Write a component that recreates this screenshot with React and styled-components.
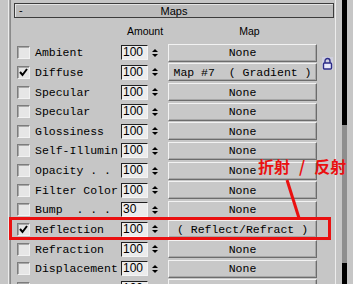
import React from 'react';
import styled, { createGlobalStyle } from 'styled-components';

const GlobalStyle = createGlobalStyle`
    html, body {
        margin: 0;
        padding: 0;
        background: #c6c6c6;
    }
    body {
        width: 353px;
        height: 284px;
        overflow: hidden;
    }
`;

const maps = [
    { name: 'Ambient', amount: 100 },
    { name: 'Diffuse', amount: 100, checked: true, map: 'Map #7  ( Gradient )' },
    { name: 'Specular', amount: 100 },
    { name: 'Specular', amount: 100 },
    { name: 'Glossiness', amount: 100 },
    { name: 'Self-Illumin', amount: 100 },
    { name: 'Opacity . .', amount: 100 },
    { name: 'Filter Color', amount: 100 },
    { name: 'Bump  . . .', amount: 30 },
    { name: 'Reflection', amount: 100, checked: true, map: '( Reflect/Refract )' },
    { name: 'Refraction', amount: 100 },
    { name: 'Displacement', amount: 100 },
    { name: '', amount: 100 },
];

const Page = styled.div`
    position: relative;
    display: flex;
    height: 284px;
    overflow: hidden;
    background: #c6c6c6;
    font-family: "Liberation Mono", monospace;
`;

const Gutter = styled.div`
    width: 14px;
    flex: none;
`;

const GutterLine = styled.div`
    height: 100%;
    width: 1px;
    margin-left: 8px;
    background: #a4a4a4;
    border-left: 1px solid #ececec;
    border-right: 1px solid #8a8a8a;
`;

const Rollout = styled.div`
    position: relative;
    width: 320px;
    flex: none;
    padding-top: 3px;
    display: flex;
    flex-direction: column;
    > * {
        flex: none;
    }
`;

const TitleBar = styled.div`
    height: 15px;
    box-sizing: border-box;
    display: grid;
    grid-template-columns: 1fr auto 1fr;
    align-items: center;
    background: #bcbcbc;
    border: 1px solid #3c3c3c;
    box-shadow: inset 1px 1px #e4e4e4;
    font-family: "Liberation Sans", Arial, sans-serif;
    font-size: 11px;
    color: #000;
`;

const Minus = styled.span`
    padding-left: 4px;
    line-height: 1;
`;

const Header = styled.div`
    height: 25px;
    display: grid;
    grid-template-columns: 108px 46px 149px;
    align-items: center;
    font-family: "Liberation Sans", Arial, sans-serif;
    font-size: 10.5px;
    color: #000;
`;

const HeadCell = styled.span`
    grid-column: ${p => p.$col};
    text-align: center;
    padding-left: ${p => p.$shift || 0}px;
`;

const Row = styled.div`
    height: 19.64px;
    display: flex;
    align-items: center;
    padding-left: 3px;
`;

const Check = styled.div`
    width: 13px;
    height: 13px;
    box-sizing: border-box;
    flex: none;
    display: flex;
    align-items: center;
    justify-content: center;
    background: #e6e6e6;
    border: 1px solid;
    border-color: #7c7c7c #f2f2f2 #f2f2f2 #7c7c7c;
    box-shadow: inset 1px 1px #a8a8a8;
`;

const Label = styled.span`
    width: 86px;
    margin-left: 5px;
    flex: none;
    font-size: 11.5px;
    white-space: pre;
    color: #000;
`;

const Field = styled.div`
    width: 27px;
    height: 15px;
    box-sizing: border-box;
    flex: none;
    padding-left: 1px;
    background: #ececec;
    border: 1px solid;
    border-color: #202020 #f4f4f4 #f4f4f4 #202020;
    font-family: "Liberation Sans", Arial, sans-serif;
    font-size: 12px;
    line-height: 13px;
    color: #000;
`;

const Spinner = styled.div`
    width: 13px;
    height: 15px;
    flex: none;
    display: flex;
    flex-direction: column;
    align-items: center;
    justify-content: center;
    gap: 2px;
`;

const Arrow = styled.span`
    width: 0;
    height: 0;
    border-left: 3px solid transparent;
    border-right: 3px solid transparent;
    ${p => p.$down ? 'border-top: 3px solid #000;' : 'border-bottom: 3px solid #000;'}
`;

const MapButton = styled.div`
    width: 149px;
    height: 18px;
    box-sizing: border-box;
    flex: none;
    margin-left: 7px;
    display: flex;
    align-items: center;
    justify-content: center;
    background: #c8c8c8;
    border: 1px solid;
    border-color: #f2f2f2 #6c6c6c #6c6c6c #f2f2f2;
    box-shadow: inset -1px -1px #a6a6a6;
    font-size: 11.5px;
    white-space: pre;
    color: #000;
`;

const Lock = styled.svg`
    position: absolute;
    left: 308px;
    top: 57px;
`;

const ScrollArea = styled.div`
    flex: 1;
    display: flex;
`;

const ScrollEdge = styled.div`
    width: 1px;
    margin-left: 1px;
    background: #ececec;
`;

const Track = styled.div`
    width: 5px;
    margin-left: 6px;
    display: flex;
    flex-direction: column;
    background: #8e8e8e;
`;

const Thumb = styled.div`
    height: ${p => p.$h}px;
    background: #000;
`;

const RedBox = styled.div`
    position: absolute;
    left: 9px;
    top: 217px;
    width: 322px;
    height: 23px;
    box-sizing: border-box;
    border: 3px solid #ea1010;
`;

const RedLabel = styled.div`
    position: absolute;
    left: 258px;
    top: 157px;
    display: flex;
    align-items: center;
    gap: 9px;
    color: #ea1010;
    font-family: "Noto Sans CJK SC", sans-serif;
    font-size: 16px;
    font-weight: 700;
    line-height: 18px;
`;

const Pointer = styled.svg`
    position: absolute;
    left: 0;
    top: 0;
`;

function CheckMark() {
    return (
        <svg width="9" height="9" viewBox="0 0 9 9">
            <polyline points="1,4 3.5,7 8,1" fill="none" stroke="#000" strokeWidth="2" />
        </svg>
    );
}

export default function App() {
    return (
        <Page>
            <GlobalStyle />
            <Gutter><GutterLine /></Gutter>
            <Rollout>
                <TitleBar>
                    <Minus>-</Minus>
                    <span>Maps</span>
                    <span />
                </TitleBar>
                <Header>
                    <HeadCell $col={2}>Amount</HeadCell>
                    <HeadCell $col={3} $shift={14}>Map</HeadCell>
                </Header>
                {maps.map((m, i) => (
                    <Row key={i}>
                        <Check>{m.checked && <CheckMark />}</Check>
                        <Label>{m.name}</Label>
                        <Field>{m.amount}</Field>
                        <Spinner>
                            <Arrow />
                            <Arrow $down />
                        </Spinner>
                        <MapButton>{m.map || 'None'}</MapButton>
                    </Row>
                ))}
                <Lock width="11" height="13" viewBox="0 0 11 13">
                    <rect x="0" y="0" width="11" height="13" fill="#d6d6ee" opacity="0.6" />
                    <path d="M3 6V4a2.5 2.5 0 0 1 5 0v2" fill="none" stroke="#2c2c88" strokeWidth="1.4" />
                    <rect x="1.5" y="6" width="8" height="6" rx="1" fill="#e8e8fa" stroke="#2c2c88" strokeWidth="1.4" />
                </Lock>
            </Rollout>
            <ScrollArea>
                <ScrollEdge />
                <Track>
                    <Thumb $h={125} />
                    <div style={{ flex: 1 }} />
                    <Thumb $h={21} />
                </Track>
            </ScrollArea>
            <RedBox />
            <RedLabel>
                <span>折射</span>
                <span>/</span>
                <span>反射</span>
            </RedLabel>
            <Pointer width="353" height="284">
                <line x1="287" y1="180" x2="299" y2="218" stroke="#ea1010" strokeWidth="3" />
            </Pointer>
        </Page>
    );
}
